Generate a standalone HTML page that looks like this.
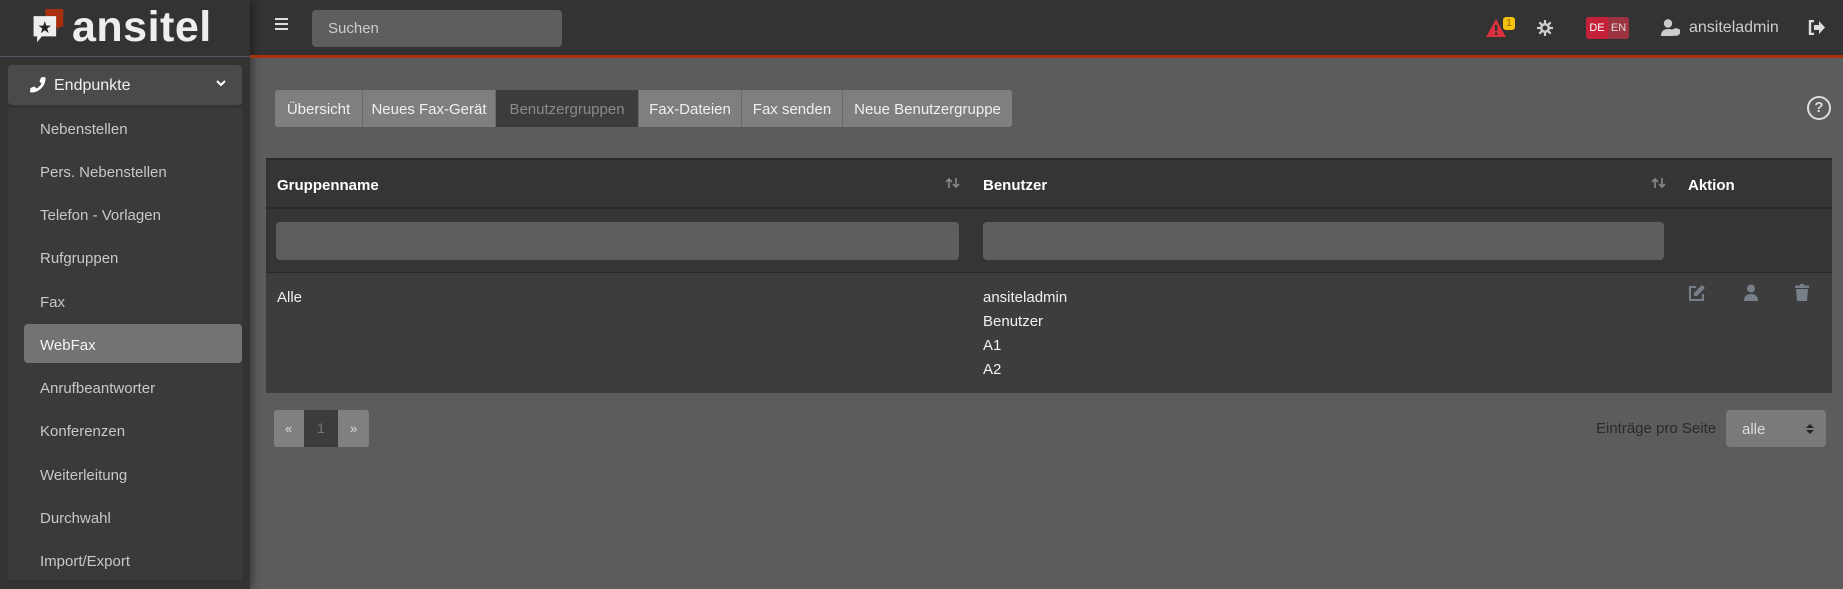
<!DOCTYPE html>
<html><head><meta charset="utf-8"><style>
*{box-sizing:border-box;margin:0;padding:0}
body{width:1843px;height:589px;overflow:hidden;background:#5c5c5c;font-family:"Liberation Sans",sans-serif;font-size:15px;color:#ddd;position:relative}
.abs{position:absolute}
#top{left:0;top:0;width:1843px;height:56px;background:#333}
#red{left:250px;top:55px;width:1593px;height:3px;background:#a8300e}
#side{left:0;top:0;width:250px;height:589px;background:#333;box-shadow:3px 0 8px rgba(0,0,0,.35)}
#sideline{left:0;top:56px;width:250px;height:1px;background:#4d5560}
.nav{position:absolute;left:40px;color:#c8c8c8;font-size:15px}
.tab{position:absolute;top:90px;height:37px;line-height:39px;background:#7f7f7f;color:#f0f0f0;text-align:center;border-right:1px solid #6a6a6a;font-size:15px}
.th{position:absolute;top:177px;font-weight:bold;color:#fff;font-size:15px}
.td{position:absolute;color:#f0f0f0;font-size:15px}
</style></head><body>
<div class="abs" id="top"></div>
<div class="abs" id="side"></div>
<div class="abs" id="sideline"></div>
<div class="abs" id="red"></div>
<!-- logo -->
<svg class="abs" style="left:31px;top:9px" width="36" height="38" viewBox="0 0 30 32">
<path d="M12 0h15v15h-3l-2 3v-3h-10z" fill="#a8300e"/>
<path d="M2 6h19v17h-12l-4 5v-5h-3z" fill="#eee"/>
<text x="11.5" y="20" font-size="14" text-anchor="middle" fill="#222">★</text></svg>
<div class="abs" style="left:72px;top:3px;font-size:43px;font-weight:bold;color:#eee;letter-spacing:0.5px">ansitel</div>
<!-- hamburger -->
<div class="abs" style="left:275px;top:18px;width:13px;height:2px;background:#ddd;box-shadow:0 5px 0 #ddd,0 10px 0 #ddd"></div>
<div class="abs" style="left:312px;top:10px;width:250px;height:37px;background:#5e5e5e;border-radius:4px;color:#ccc;line-height:37px;padding-left:16px;font-size:15px">Suchen</div>
<!-- right top -->
<svg class="abs" style="left:1486px;top:19px" width="20" height="18" viewBox="0 0 20 18"><path d="M10 0L20 18H0z" fill="#d9313d"/><rect x="9" y="6" width="2.4" height="6" fill="#333"/><rect x="9" y="13.5" width="2.4" height="2.4" fill="#333"/></svg>
<div class="abs" style="left:1503px;top:17px;width:12px;height:13px;background:#f5c011;border-radius:3px;color:#8a6a00;font-size:10px;text-align:center;line-height:13px">1</div>
<svg class="abs" style="left:1536px;top:19px" width="18" height="18" viewBox="0 0 18 18"><g stroke="#ccc" stroke-width="2.2"><path d="M9 1v16M1 9h16M3.3 3.3l11.4 11.4M14.7 3.3L3.3 14.7"/></g><circle cx="9" cy="9" r="5" fill="#ccc"/><circle cx="9" cy="9" r="2.5" fill="#333"/></svg>
<div class="abs" style="left:1586px;top:17px;width:43px;height:22px;background:#9c3340;border-radius:3px;overflow:hidden;font-size:11px;line-height:22px">
<span style="display:inline-block;width:22px;background:#c5203a;color:#fff;text-align:center">DE</span><span style="display:inline-block;width:21px;color:#ddd;text-align:center">EN</span></div>
<svg class="abs" style="left:1661px;top:19px" width="20" height="17" viewBox="0 0 20 17"><circle cx="7" cy="4.5" r="4.2" fill="#ccc"/><path d="M0 17c0-5 3-7 7-7s5 1 6 2v5z" fill="#ccc"/><path d="M15 9l4 1.5v3c0 2-2 3-4 3.5-2-.5-4-1.5-4-3.5v-3z" fill="#ccc"/></svg>
<div class="abs" style="left:1689px;top:19px;color:#ccc;font-size:16px">ansiteladmin</div>
<svg class="abs" style="left:1808px;top:20px" width="17" height="15" viewBox="0 0 17 15"><path d="M6 1H2v13h4" stroke="#ddd" stroke-width="2.4" fill="none"/><path d="M6 5h5V1l6 6.5-6 6.5V10H6z" fill="#ddd"/></svg>
<!-- sidebar -->
<div class="abs" style="left:8px;top:65px;width:234px;height:40px;background:#4a4a4a;border-radius:4px"></div>
<svg class="abs" style="left:29px;top:76px" width="17" height="17" viewBox="0 0 17 17"><path d="M15 1c1 0 1.5.5 1.5 1.5C16.5 10 10 16.5 2.5 16.5 1.5 16.5 1 16 1 15l.5-3 4-1.5 2 2c2-1 4-3 5-5l-2-2L12 1.5z" fill="#fff"/></svg>
<div class="abs" style="left:54px;top:77px;color:#f0f0f0;font-size:16px">Endpunkte</div>
<svg class="abs" style="left:216px;top:80px" width="10" height="7" viewBox="0 0 10 7"><path d="M1 1l4 4 4-4" stroke="#fff" stroke-width="2" fill="none"/></svg>
<div class="abs" style="left:8px;top:108px;width:234px;height:472px;background:#3a3a3a"></div>
<div class="abs" style="left:24px;top:324px;width:218px;height:39px;background:#737373;border-radius:4px"></div>
<div class="nav" style="top:121px">Nebenstellen</div>
<div class="nav" style="top:164px">Pers. Nebenstellen</div>
<div class="nav" style="top:207px">Telefon - Vorlagen</div>
<div class="nav" style="top:250px">Rufgruppen</div>
<div class="nav" style="top:294px">Fax</div>
<div class="nav" style="top:337px;color:#f4f4f4">WebFax</div>
<div class="nav" style="top:380px">Anrufbeantworter</div>
<div class="nav" style="top:423px">Konferenzen</div>
<div class="nav" style="top:467px">Weiterleitung</div>
<div class="nav" style="top:510px">Durchwahl</div>
<div class="nav" style="top:553px">Import/Export</div>
<!-- tabs -->
<div class="tab" style="left:275px;width:88px;border-radius:3px 0 0 3px">Übersicht</div>
<div class="tab" style="left:363px;width:133px">Neues Fax-Gerät</div>
<div class="tab" style="left:496px;width:143px;background:#3c3c3c;color:#8a8a8a">Benutzergruppen</div>
<div class="tab" style="left:639px;width:103px">Fax-Dateien</div>
<div class="tab" style="left:742px;width:101px">Fax senden</div>
<div class="tab" style="left:843px;width:169px;border-radius:0 3px 3px 0;border-right:0">Neue Benutzergruppe</div>
<div class="abs" style="left:1807px;top:96px;width:24px;height:24px;border:2.5px solid #ddd;border-radius:50%;color:#ddd;font-weight:bold;font-size:15px;text-align:center;line-height:19px">?</div>
<!-- table -->
<div class="abs" style="left:266px;top:158px;width:1566px;height:51px;background:#353535;border-top:2px solid #2a2a2a;border-bottom:2px solid #2a2a2a"></div>
<div class="abs" style="left:266px;top:209px;width:1566px;height:64px;background:#353535;border-bottom:1px solid #2a2a2a"></div>
<div class="abs" style="left:266px;top:273px;width:1566px;height:120px;background:#3d3d3d"></div>
<div class="th" style="left:277px">Gruppenname</div>
<div class="th" style="left:983px">Benutzer</div>
<div class="th" style="left:1688px">Aktion</div>
<svg class="abs" style="left:945px;top:177px" width="16" height="12" viewBox="0 0 16 12"><path d="M4 11V2M1 5l3-3 3 3M11 1v9M8 7l3 3 3-3" stroke="#888" stroke-width="1.6" fill="none"/></svg>
<svg class="abs" style="left:1651px;top:177px" width="16" height="12" viewBox="0 0 16 12"><path d="M4 11V2M1 5l3-3 3 3M11 1v9M8 7l3 3 3-3" stroke="#888" stroke-width="1.6" fill="none"/></svg>
<div class="abs" style="left:276px;top:222px;width:683px;height:38px;background:#5e5e5e;border-radius:4px"></div>
<div class="abs" style="left:983px;top:222px;width:681px;height:38px;background:#5e5e5e;border-radius:4px"></div>
<div class="td" style="left:277px;top:289px">Alle</div>
<div class="td" style="left:983px;top:286px;line-height:24px">ansiteladmin<br>Benutzer<br>A1<br>A2</div>
<svg class="abs" style="left:1688px;top:284px" width="18" height="18" viewBox="0 0 18 18"><path d="M8 3H2v13h13v-6" stroke="#778089" stroke-width="2" fill="none"/><path d="M14 1l3 3-8 8H6V9z" fill="#778089"/></svg>
<svg class="abs" style="left:1743px;top:284px" width="16" height="17" viewBox="0 0 16 17"><circle cx="8" cy="4.5" r="4" fill="#778089"/><path d="M1 17c0-5 3-7 7-7s7 2 7 7z" fill="#778089"/></svg>
<svg class="abs" style="left:1795px;top:284px" width="14" height="17" viewBox="0 0 14 17"><rect x="0" y="1.5" width="14" height="2.5" fill="#778089"/><rect x="5" y="0" width="4" height="2" fill="#778089"/><path d="M1 5h12l-1 12H2z" fill="#778089"/></svg>
<!-- pagination -->
<div class="abs" style="left:274px;top:410px;width:95px;height:37px;background:#808080;border-radius:3px"></div>
<div class="abs" style="left:304px;top:410px;width:34px;height:37px;background:#3c3c3c"></div>
<div class="abs" style="left:285px;top:421px;color:#ddd;font-size:13px">«</div>
<div class="abs" style="left:317px;top:420px;color:#777;font-size:14px">1</div>
<div class="abs" style="left:350px;top:421px;color:#ddd;font-size:13px">»</div>
<div class="abs" style="left:1596px;top:420px;color:#2a2a2a;font-size:15px">Einträge pro Seite</div>
<div class="abs" style="left:1726px;top:410px;width:100px;height:37px;background:#7a7a7a;border-radius:4px;color:#ddd;padding-left:16px;line-height:39px;font-size:15px">alle</div>
<svg class="abs" style="left:1806px;top:423px" width="8" height="12" viewBox="0 0 8 12"><path d="M0 5l4-4 4 4zM0 7l4 4 4-4z" fill="#222"/></svg>
</body></html>
